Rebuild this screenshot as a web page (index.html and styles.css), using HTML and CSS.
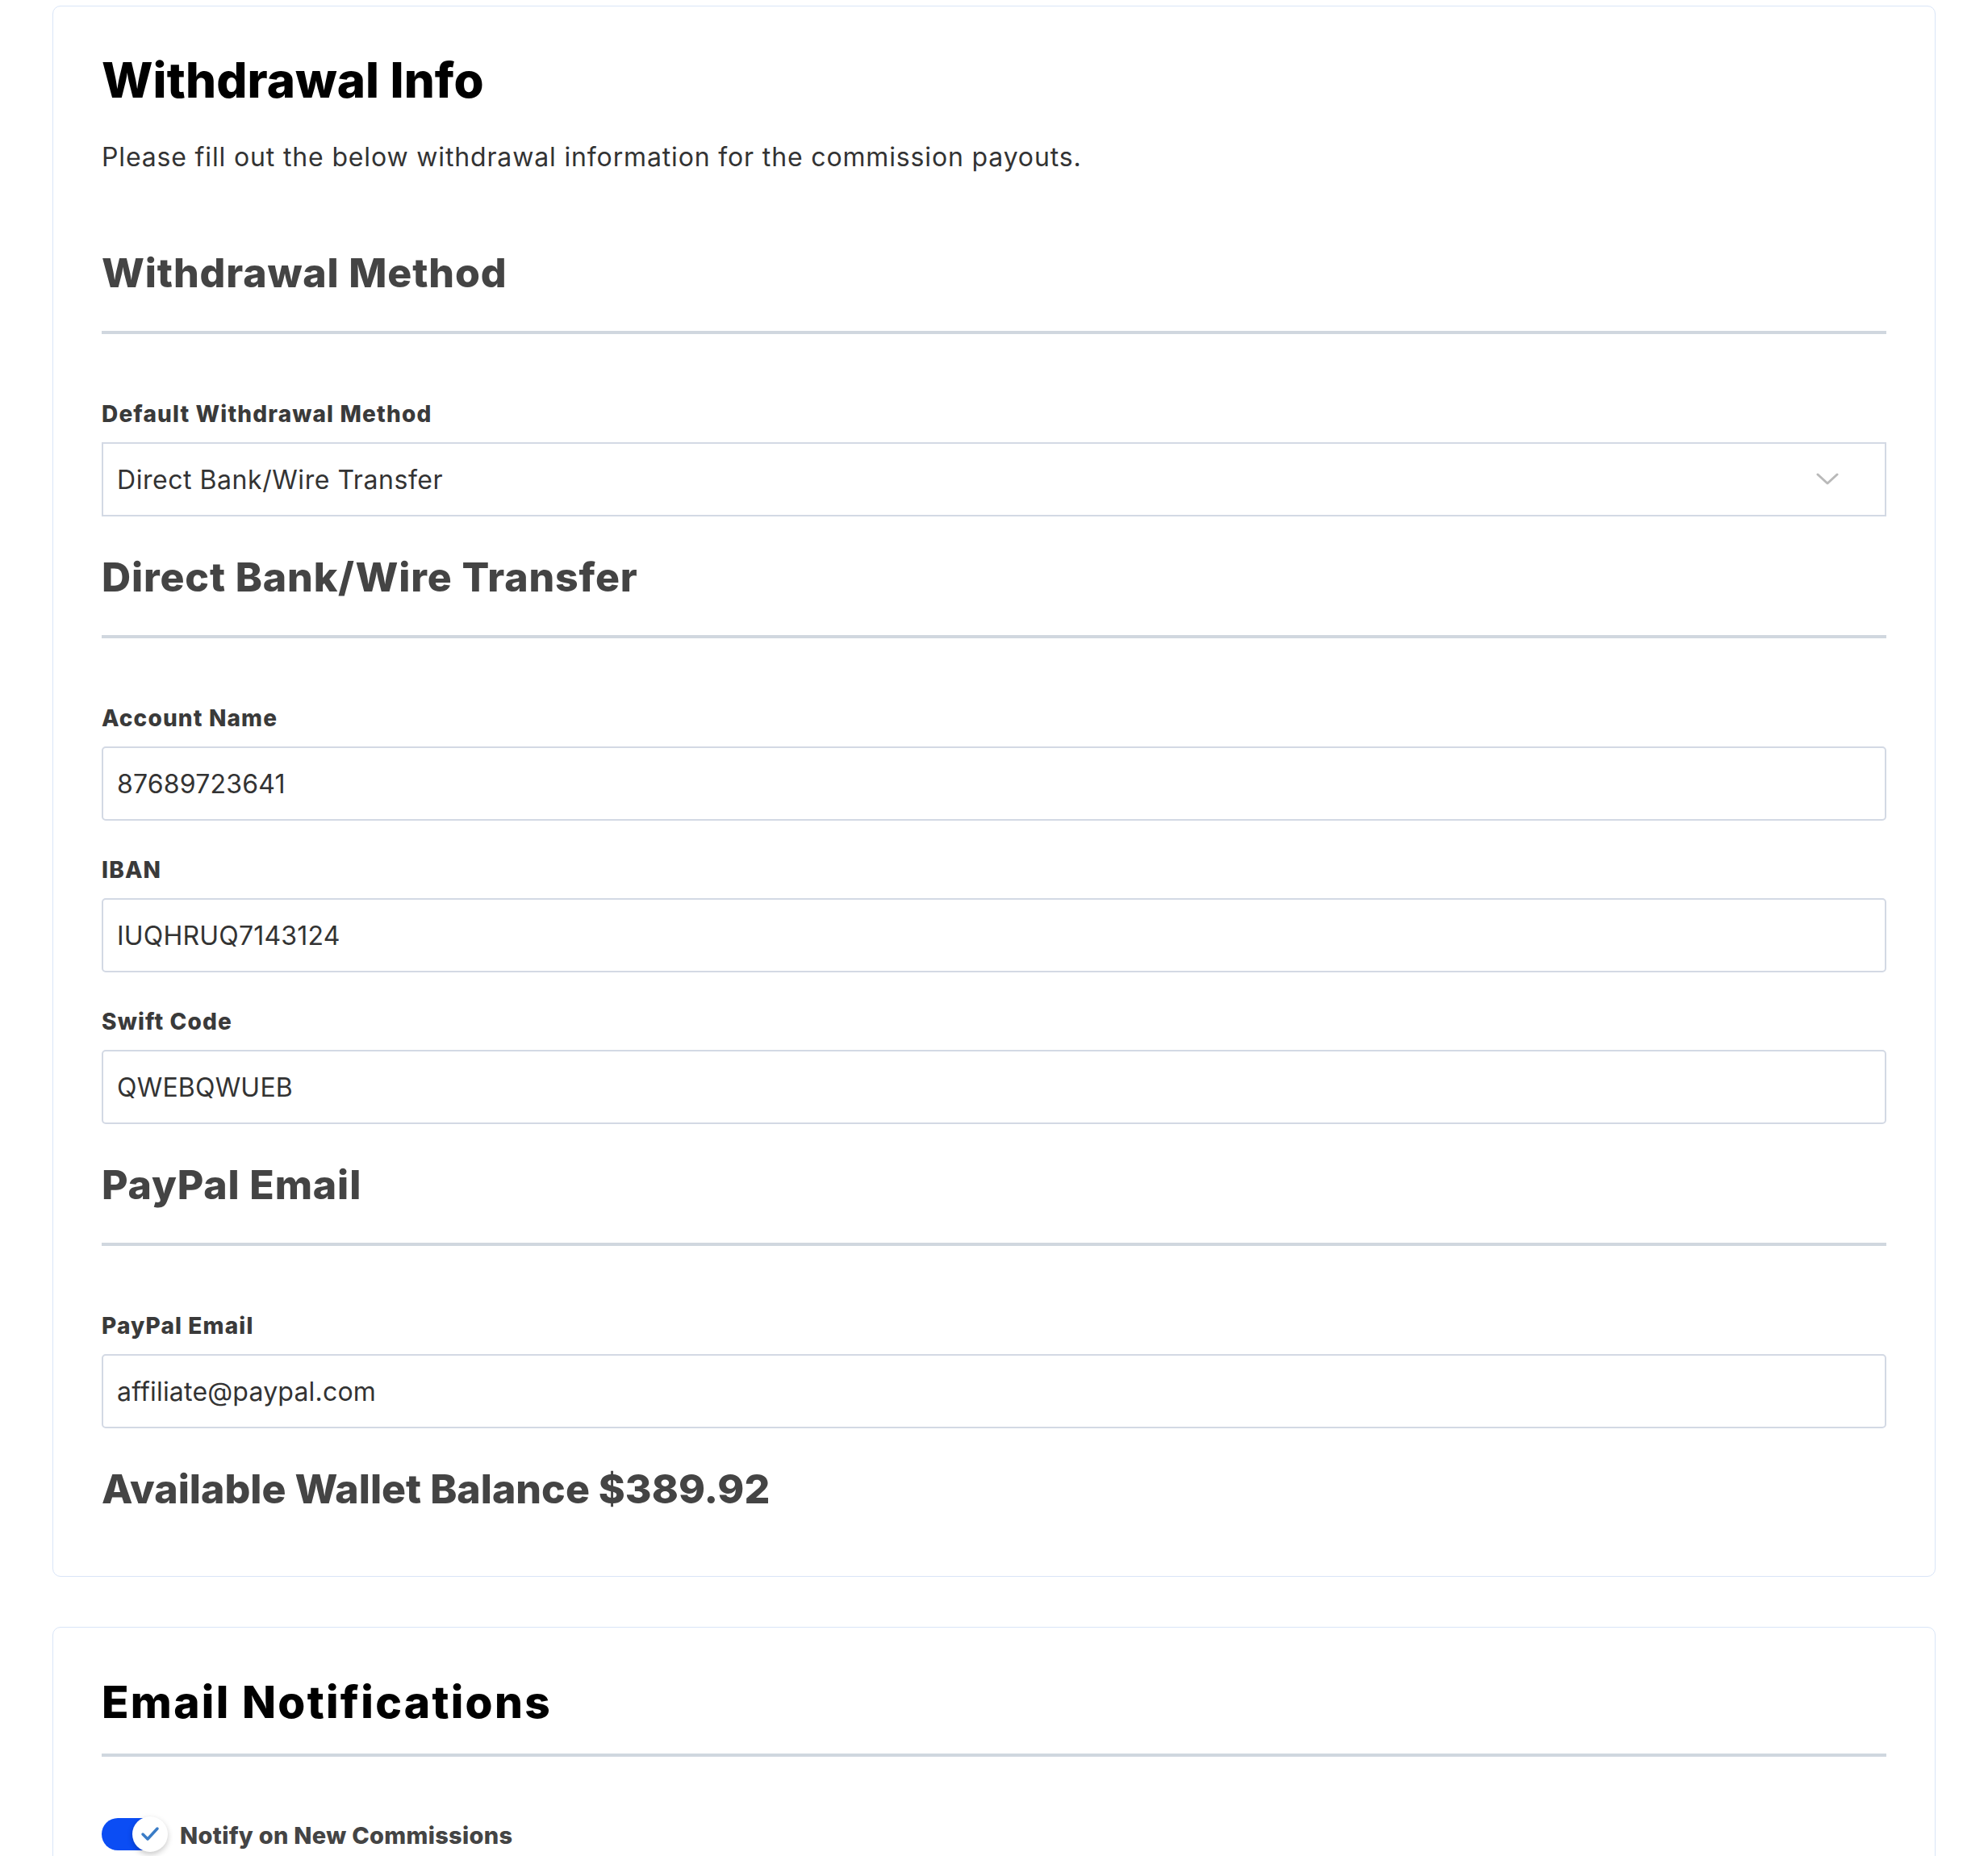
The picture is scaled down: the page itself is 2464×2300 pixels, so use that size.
FILE: index.html
```html
<!DOCTYPE html>
<html lang="en">
<head>
<meta charset="utf-8">
<title>Withdrawal Info</title>
<link rel="stylesheet" href="styles.css">
</head>
<body>
<div class="page">
  <section class="card card-withdraw">
    <h1 class="card-title">Withdrawal Info</h1>
    <p class="card-desc">Please fill out the below withdrawal information for the commission payouts.</p>

    <div class="section-head"><h2 class="section-title">Withdrawal Method</h2></div>
    <div class="field">
      <label class="field-label">Default Withdrawal Method</label>
      <div class="select">
        <span class="select-value">Direct Bank/Wire Transfer</span>
        <svg class="chevron" width="28" height="16" viewBox="0 0 28 16" aria-hidden="true"><polyline points="2,2 14,13 26,2" fill="none" stroke="#b9b9b9" stroke-width="3" stroke-linecap="round" stroke-linejoin="round"/></svg>
      </div>
    </div>

    <div class="section-head"><h2 class="section-title">Direct Bank/Wire Transfer</h2></div>
    <div class="field">
      <label class="field-label">Account Name</label>
      <div class="input">87689723641</div>
    </div>
    <div class="field">
      <label class="field-label">IBAN</label>
      <div class="input">IUQHRUQ7143124</div>
    </div>
    <div class="field">
      <label class="field-label">Swift Code</label>
      <div class="input">QWEBQWUEB</div>
    </div>

    <div class="section-head"><h2 class="section-title">PayPal Email</h2></div>
    <div class="field">
      <label class="field-label">PayPal Email</label>
      <div class="input">affiliate@paypal.com</div>
    </div>

    <h2 class="balance">Available Wallet Balance $389.92</h2>
  </section>

  <section class="card card-notify">
    <div class="notify-head"><h2 class="notify-title">Email Notifications</h2></div>
    <div class="toggle-row">
      <span class="toggle">
        <span class="toggle-knob">
          <svg width="24" height="20" viewBox="0 0 24 20" aria-hidden="true"><polyline points="3,10 9,16 21,3" fill="none" stroke="#3a7cc6" stroke-width="3.5" stroke-linecap="round" stroke-linejoin="round"/></svg>
        </span>
      </span>
      <span class="toggle-label">Notify on New Commissions</span>
    </div>
  </section>
</div>
</body>
</html>
```

FILE: styles.css
```css
html, body {
  margin: 0;
  padding: 0;
  background: #ffffff;
}

body {
  font-family: Inter, "Noto Sans", "DejaVu Sans", sans-serif;
  color: #333333;
}

.page {
  padding: 7px 65px 0;
}

.card {
  border: 1px solid #d9e5f7;
  border-radius: 10px;
  background: #ffffff;
}

.card-withdraw {
  padding: 55px 60px 78px;
}

.card-title {
  margin: 0;
  font-size: 60px;
  line-height: 72px;
  font-weight: 800;
  letter-spacing: 0.1px;
  color: #000000;
}

.card-desc {
  margin: 36px 0 0;
  padding-bottom: 44px;
  font-size: 32px;
  line-height: 48px;
  font-weight: 400;
  letter-spacing: 0.85px;
  color: #333333;
}

.section-head {
  margin-top: 45px;
  padding-bottom: 42px;
  border-bottom: 4px solid #d0d7df;
}

.section-title {
  margin: 0;
  font-size: 50px;
  line-height: 60px;
  font-weight: 800;
  letter-spacing: 0.85px;
  color: #444444;
}

.field {
  margin-top: 41px;
}

.section-head + .field {
  margin-top: 79px;
}

.field-label {
  display: block;
  font-size: 28px;
  line-height: 40px;
  font-weight: 800;
  letter-spacing: 1.15px;
  color: #3a3a3a;
}

.select,
.input {
  margin-top: 15px;
  box-sizing: border-box;
  height: 92px;
  display: flex;
  align-items: center;
  padding: 0 57px 0 17px;
  border: 2px solid #d3d9e4;
  font-size: 32px;
  letter-spacing: 0.2px;
  color: #333333;
  background: #ffffff;
}

.select {
  letter-spacing: 0.55px;
}

.input {
  border-radius: 5px;
}

.select-value {
  flex: 1;
}

.chevron {
  display: block;
  flex: none;
}

.balance {
  margin: 45px 0 0;
  font-size: 50px;
  line-height: 60px;
  font-weight: 800;
  letter-spacing: 0px;
  color: #444444;
}

.card-notify {
  margin-top: 62px;
  padding: 59px 60px 60px;
}

.notify-head {
  padding-bottom: 31px;
  border-bottom: 4px solid #d0d7df;
}

.notify-title {
  margin: 0;
  font-size: 55px;
  line-height: 66px;
  font-weight: 800;
  letter-spacing: 2.3px;
  color: #000000;
}

.toggle-row {
  margin-top: 72px;
  display: flex;
  align-items: center;
  gap: 15px;
}

.toggle {
  position: relative;
  display: block;
  width: 82px;
  height: 44px;
  flex: none;
}

.toggle::before {
  content: "";
  position: absolute;
  left: 0;
  top: 2px;
  width: 76px;
  height: 40px;
  border-radius: 20px;
  background: #0b4df4;
}

.toggle-knob {
  position: absolute;
  left: 38px;
  top: 0;
  width: 44px;
  height: 44px;
  border-radius: 50%;
  background: #ffffff;
  box-shadow: 0 3px 7px rgba(0, 0, 0, 0.22);
  display: flex;
  align-items: center;
  justify-content: center;
}

.toggle-knob svg {
  display: block;
}

.toggle-label {
  padding-top: 4px;
  font-size: 29px;
  line-height: 44px;
  font-weight: 800;
  letter-spacing: 0.3px;
  color: #444444;
}
```
